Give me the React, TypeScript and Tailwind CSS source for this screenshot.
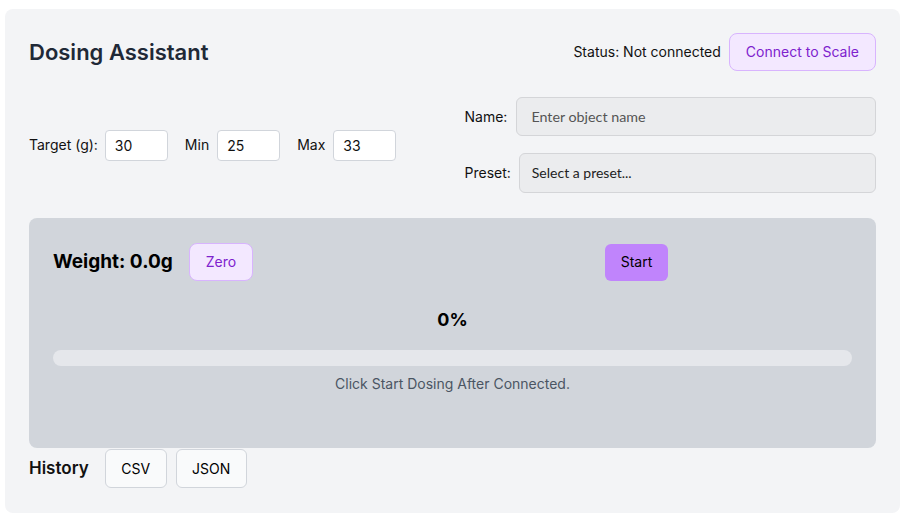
import React from "react";

export default function App() {
  return (
    <div className="min-h-[521px] w-[912px] bg-white" style={{ fontFamily: "Inter, 'Noto Sans', sans-serif" }}>
      <div className="ml-[5px] mt-[9px] w-[895px] rounded-lg bg-[#f3f4f6] px-6 pb-[25px] pt-6">
        {/* Header */}
        <div className="flex h-[38px] items-center justify-between">
          <h1 className="mt-px text-[22px] font-semibold text-[#1f2937]">Dosing Assistant</h1>
          <div className="flex items-center gap-2">
            <span className="text-sm text-[#111]">Status: Not connected</span>
            <button className="h-[38px] rounded-lg border border-[#d8b4fe] bg-[#f3e8ff] px-4 text-sm text-[#7e22ce]">
              Connect to Scale
            </button>
          </div>
        </div>

        {/* Inputs */}
        <div className="mt-[26px] grid grid-cols-2 gap-6">
          <div className="flex items-center text-sm text-[#111]">
            <label className="mr-[7px]">Target (g):</label>
            <input
              defaultValue="30"
              className="h-[31px] w-[63px] rounded border border-[#d1d5db] bg-white px-[9px] text-sm text-[#111] outline-none"
            />
            <label className="ml-[17px] mr-2">Min</label>
            <input
              defaultValue="25"
              className="h-[31px] w-[63px] rounded border border-[#d1d5db] bg-white px-[9px] text-sm text-[#111] outline-none"
            />
            <label className="ml-[17px] mr-2">Max</label>
            <input
              defaultValue="33"
              className="h-[31px] w-[63px] rounded border border-[#d1d5db] bg-white px-[9px] text-sm text-[#111] outline-none"
            />
          </div>
          <div className="flex flex-col gap-[17px] text-sm text-[#111]">
            <div className="flex items-center gap-[9px]">
              <label>Name:</label>
              <input
                placeholder="Enter object name"
                className="h-[39px] flex-1 rounded-md border border-[#d4d5d8] bg-[#ebecee] px-[14px] text-[14.3px] text-[#111] outline-none placeholder:text-[#555]"
                style={{ fontFamily: "Lato, sans-serif" }}
              />
            </div>
            <div className="flex items-center gap-2">
              <label>Preset:</label>
              <div
                className="flex h-[40px] flex-1 items-center rounded-md border border-[#d4d5d8] bg-[#ebecee] px-[12px] text-sm text-[#222]"
                style={{ fontFamily: "Lato, sans-serif" }}
              >
                Select a preset...
              </div>
            </div>
          </div>
        </div>

        {/* Panel */}
        <div className="mt-[25px] h-[230px] rounded-lg bg-[#d1d5db] px-6 pt-[25px]">
          <div className="flex items-center">
            <div className="flex items-center gap-4">
              <span className="text-[19px] font-bold text-black">Weight: 0.0g</span>
              <button className="h-[38px] rounded-lg border border-[#d8b4fe] bg-[#f3e8ff] px-4 text-sm text-[#7e22ce]">
                Zero
              </button>
            </div>
            <div className="flex-1" />
            <button className="mr-[184px] h-[37px] w-[63px] rounded-md bg-[#c084fc] text-sm text-black">Start</button>
          </div>
          <div className="mt-[25px] text-center text-lg font-bold leading-7 text-black">0%</div>
          <div className="mt-4 h-4 w-full rounded-full bg-[#e5e7eb]" />
          <div className="mt-2 text-center text-sm text-[#4b5563]">Click Start Dosing After Connected.</div>
        </div>

        {/* History */}
        <div className="mt-px flex items-center">
          <span className="mr-4 text-[17px] font-semibold text-[#111]">History</span>
          <button className="h-[39px] w-[62px] rounded-md border border-[#d1d5db] bg-[#f9fafb] text-sm text-black">CSV</button>
          <button className="ml-[9px] h-[39px] w-[71px] rounded-md border border-[#d1d5db] bg-[#f9fafb] text-sm text-black">JSON</button>
        </div>
      </div>
    </div>
  );
}
